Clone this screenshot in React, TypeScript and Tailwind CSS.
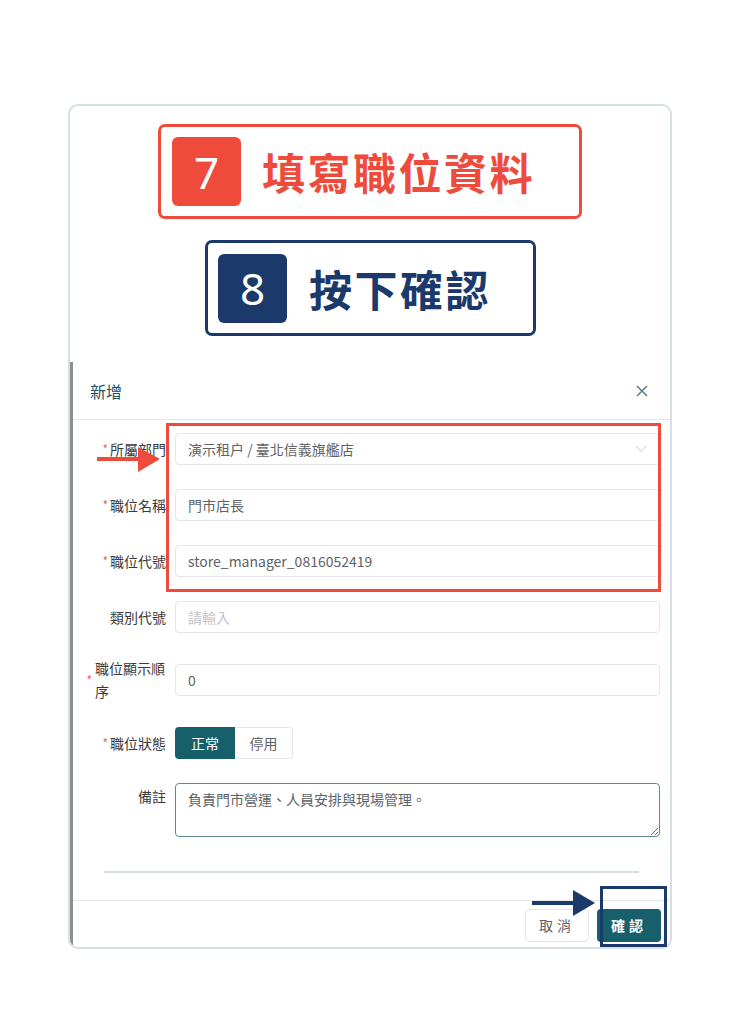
import React from "react";

const cjk = "font-['Noto_Sans_CJK_TC','Noto_Sans',sans-serif]";

type RowProps = {
  label: string;
  required?: boolean;
  children: React.ReactNode;
  className?: string;
};

const Row = ({ label, required, children, className = "" }: RowProps) => (
  <div className={`flex items-center ${className}`}>
    <div className="flex w-[102px] shrink-0 items-center justify-end pr-[9px] text-[14px] text-[#3a3a3a]">
      {required && <span className="mr-[2px] text-[12px] leading-none text-[#f5587b]">*</span>}
      <span>{label}</span>
    </div>
    <div className="flex-1">{children}</div>
  </div>
);

const inputCls =
  "h-[32px] w-full rounded-[4px] border border-[#e3e6ea] bg-white px-[12px] text-[14px] text-[#606266] outline-none placeholder:text-[#c0c4cc]";

export default function App() {
  return (
    <div className={`relative h-[1018px] w-[741px] bg-white pt-[104px] ${cjk}`}>
      <div className="ml-[68px] flex h-[845px] w-[604px] flex-col overflow-hidden rounded-[10px] border-2 border-[#d6dfe3] bg-white">
        {/* step 7 */}
        <div className="mt-[18px] flex justify-center">
          <div className="flex h-[95px] w-[424px] items-center gap-[21px] rounded-[7px] border-[3px] border-[#ef4b3c] pl-[11px]">
            <div className="flex h-[69px] w-[69px] items-center justify-center rounded-[6px] bg-[#ef4b3c] font-['Noto_Sans',sans-serif] text-[44px] leading-none text-white">
              7
            </div>
            <span className="text-[43px] font-bold leading-none tracking-[2.5px] text-[#ef4b3c]">填寫職位資料</span>
          </div>
        </div>

        {/* step 8 */}
        <div className="mt-[21px] flex justify-center">
          <div className="ml-[1px] flex h-[96px] w-[331px] items-center gap-[22px] rounded-[7px] border-[3px] border-[#1b3a6b] pl-[10px]">
            <div className="flex h-[69px] w-[69px] items-center justify-center rounded-[6px] bg-[#1b3a6b] font-['Noto_Sans',sans-serif] text-[44px] leading-none text-white">
              8
            </div>
            <span className="text-[43px] font-bold leading-none tracking-[2.5px] text-[#1b3a6b]">按下確認</span>
          </div>
        </div>

        {/* dialog */}
        <div className="-ml-[2px] mt-[26px] flex flex-1 flex-col border-l-[5px] border-[#8e8e8e]">
          <div className="flex h-[58px] items-center justify-between border-b border-[#e4e7ea] pl-[17px] pr-[22px]">
            <span className="text-[16px] text-[#27515c]">新增</span>
            <svg width="12" height="12" viewBox="0 0 12 12" className="text-[#5b7b88]">
              <path d="M1 1 L11 11 M11 1 L1 11" stroke="currentColor" strokeWidth="1.5" />
            </svg>
          </div>

          <div className="pr-[10px] pt-[13px]">
            <Row label="所屬部門" required className="mb-[24px]">
              <div className={`${inputCls} flex items-center justify-between`}>
                <span>演示租户 / 臺北信義旗艦店</span>
                <svg width="12" height="8" viewBox="0 0 12 8">
                  <path d="M1 1 L6 6.5 L11 1" fill="none" stroke="#c8ccd2" strokeWidth="1" />
                </svg>
              </div>
            </Row>
            <Row label="職位名稱" required className="mb-[24px]">
              <input readOnly className={inputCls} value="門市店長" />
            </Row>
            <Row label="職位代號" required className="mb-[24px]">
              <input readOnly className={inputCls} value="store_manager_0816052419" />
            </Row>
            <Row label="類別代號" className="mb-[24px]">
              <input readOnly className={inputCls} placeholder="請輸入" />
            </Row>
            <div className="mb-[24px] flex h-[46px] items-center">
              <div className="flex w-[102px] shrink-0 items-center justify-end pr-[9px] text-[14px] text-[#3a3a3a]">
                <span className="mr-[3px] text-[12px] leading-none text-[#f5587b]">*</span>
                <span className="w-[71px] leading-[23px]">職位顯示順序</span>
              </div>
              <div className="flex-1">
                <input readOnly className={inputCls} value="0" />
              </div>
            </div>
            <Row label="職位狀態" required className="mb-[24px]">
              <div className="flex">
                <div className="flex h-[32px] w-[60px] items-center justify-center rounded-l-[4px] bg-[#17606b] text-[14px] text-white">
                  正常
                </div>
                <div className="flex h-[32px] w-[58px] items-center justify-center rounded-r-[4px] border border-l-0 border-[#e3e6ea] text-[14px] text-[#606266]">
                  停用
                </div>
              </div>
            </Row>
            <div className="flex items-start">
              <div className="w-[102px] shrink-0 pr-[9px] pt-[3px] text-right text-[14px] text-[#3a3a3a]">備註</div>
              <textarea
                readOnly
                className="h-[54px] flex-1 rounded-[4px] border-[1.5px] border-[#5f8a90] px-[12px] py-[5px] text-[14px] leading-[20px] text-[#606266] outline-none"
                value="負責門市營運、人員安排與現場管理。"
              />
            </div>
          </div>

          <div className="mx-[31px] mt-[34px] h-[2px] bg-[#d8e0e4]" />

          <div className="mt-[27px] flex justify-end gap-[8px] border-t border-[#e4e7ea] pr-[9px] pt-[8px]">
            <div className="flex h-[33px] w-[64px] items-center justify-center rounded-[4px] border border-[#e3e6ea] text-[14px] tracking-[4px] text-[#606266]">
              取消
            </div>
            <div className="flex h-[33px] w-[64px] items-center justify-center rounded-[4px] bg-[#17606b] text-[14px] font-bold tracking-[4px] text-white">
              確認
            </div>
          </div>
        </div>
      </div>

      {/* annotations */}
      <div className="absolute left-[166px] top-[423px] h-[169px] w-[495px] border-[3px] border-[#ef4b3c]" />
      <svg className="absolute left-[96px] top-[446px]" width="66" height="28" viewBox="0 0 66 28">
        <rect x="1" y="11" width="44" height="4" fill="#ef4b3c" />
        <polygon points="42,1 64,13 42,26" fill="#ef4b3c" />
      </svg>
      <div className="absolute left-[600px] top-[886px] h-[61px] w-[67px] border-[3px] border-[#1b3a6b]" />
      <svg className="absolute left-[530px] top-[888px]" width="68" height="30" viewBox="0 0 68 30">
        <rect x="2" y="13" width="44" height="4" fill="#1b3a6b" />
        <polygon points="43,2 65,15 43,28" fill="#1b3a6b" />
      </svg>
    </div>
  );
}
